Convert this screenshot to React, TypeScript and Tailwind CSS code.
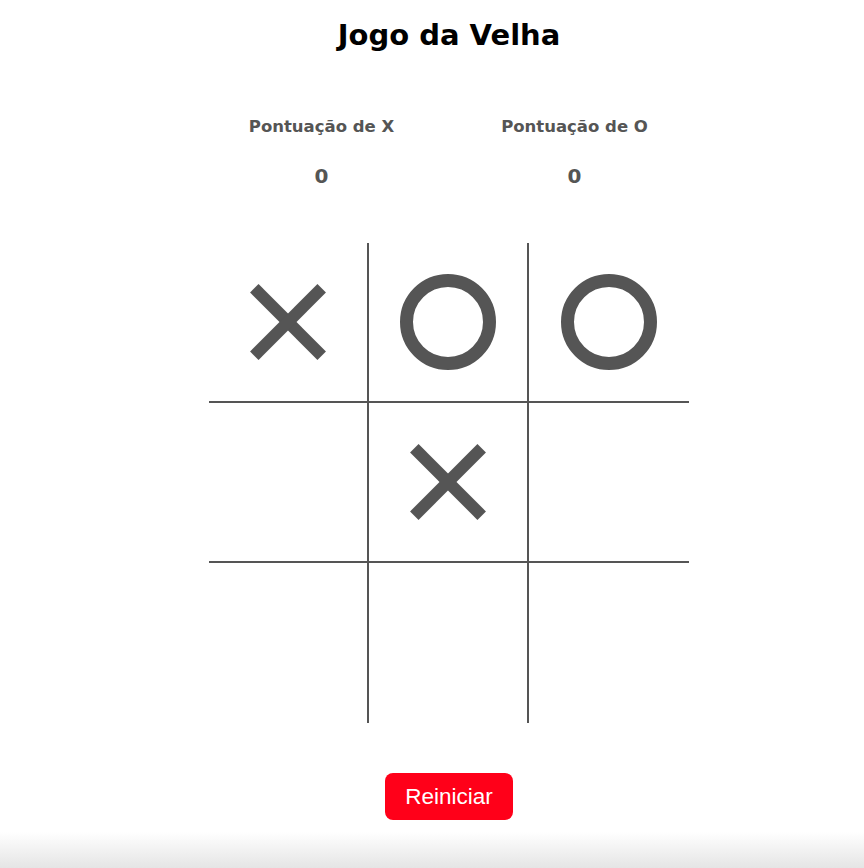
import React from "react";

type Celula = "X" | "O" | null;

const tabuleiro: Celula[] = ["X", "O", "O", null, "X", null, null, null, null];

const MarcaX = () => (
  <svg width="76" height="76" viewBox="0 0 76 76">
    <line x1="4.3" y1="4.3" x2="71.7" y2="71.7" stroke="#555555" strokeWidth="12" />
    <line x1="71.7" y1="4.3" x2="4.3" y2="71.7" stroke="#555555" strokeWidth="12" />
  </svg>
);

const MarcaO = () => (
  <svg width="96" height="96" viewBox="0 0 96 96">
    <circle cx="48" cy="48" r="41.5" fill="none" stroke="#555555" strokeWidth="13" />
  </svg>
);

const App: React.FC = () => {
  return (
    <div className="min-h-screen flex flex-col bg-white" style={{ fontFamily: "'DejaVu Sans', Verdana, sans-serif" }}>
      <div className="flex-1 flex flex-col items-center pl-[34px]">
        <h1 className="mt-[16px] text-[29px] leading-[38px] font-bold text-black">Jogo da Velha</h1>

        <div className="flex mt-[63px] mr-[2px]">
          <div className="w-[253px] flex flex-col items-center">
            <p className="text-[16.5px] leading-[20px] font-bold text-[#555555]">Pontuação de X</p>
            <p className="mt-[27px] text-[20px] leading-[24px] font-bold text-[#555555]">0</p>
          </div>
          <div className="w-[253px] flex flex-col items-center">
            <p className="text-[16.5px] leading-[20px] font-bold text-[#555555]">Pontuação de O</p>
            <p className="mt-[27px] text-[20px] leading-[24px] font-bold text-[#555555]">0</p>
          </div>
        </div>

        <div className="grid grid-cols-3 w-[480px] mt-[55px]">
          {tabuleiro.map((c, i) => {
            const col = i % 3;
            const row = Math.floor(i / 3);
            return (
              <div
                key={i}
                className={
                  "h-[160px] flex items-center justify-center border-[#555555] " +
                  (col < 2 ? "border-r-2 " : "") +
                  (row < 2 ? "border-b-2" : "")
                }
              >
                {c === "X" && <MarcaX />}
                {c === "O" && <MarcaO />}
              </div>
            );
          })}
        </div>

        <button
          className="mt-[50px] h-[47px] px-[20px] rounded-[8px] bg-[#ff0019] text-white text-[22.5px]"
          style={{ fontFamily: "'Liberation Sans', Arial, sans-serif" }}
        >
          Reiniciar
        </button>
      </div>
      <div className="h-[36px] bg-gradient-to-b from-white to-[#e5e5e5]" />
    </div>
  );
};

export default App;
